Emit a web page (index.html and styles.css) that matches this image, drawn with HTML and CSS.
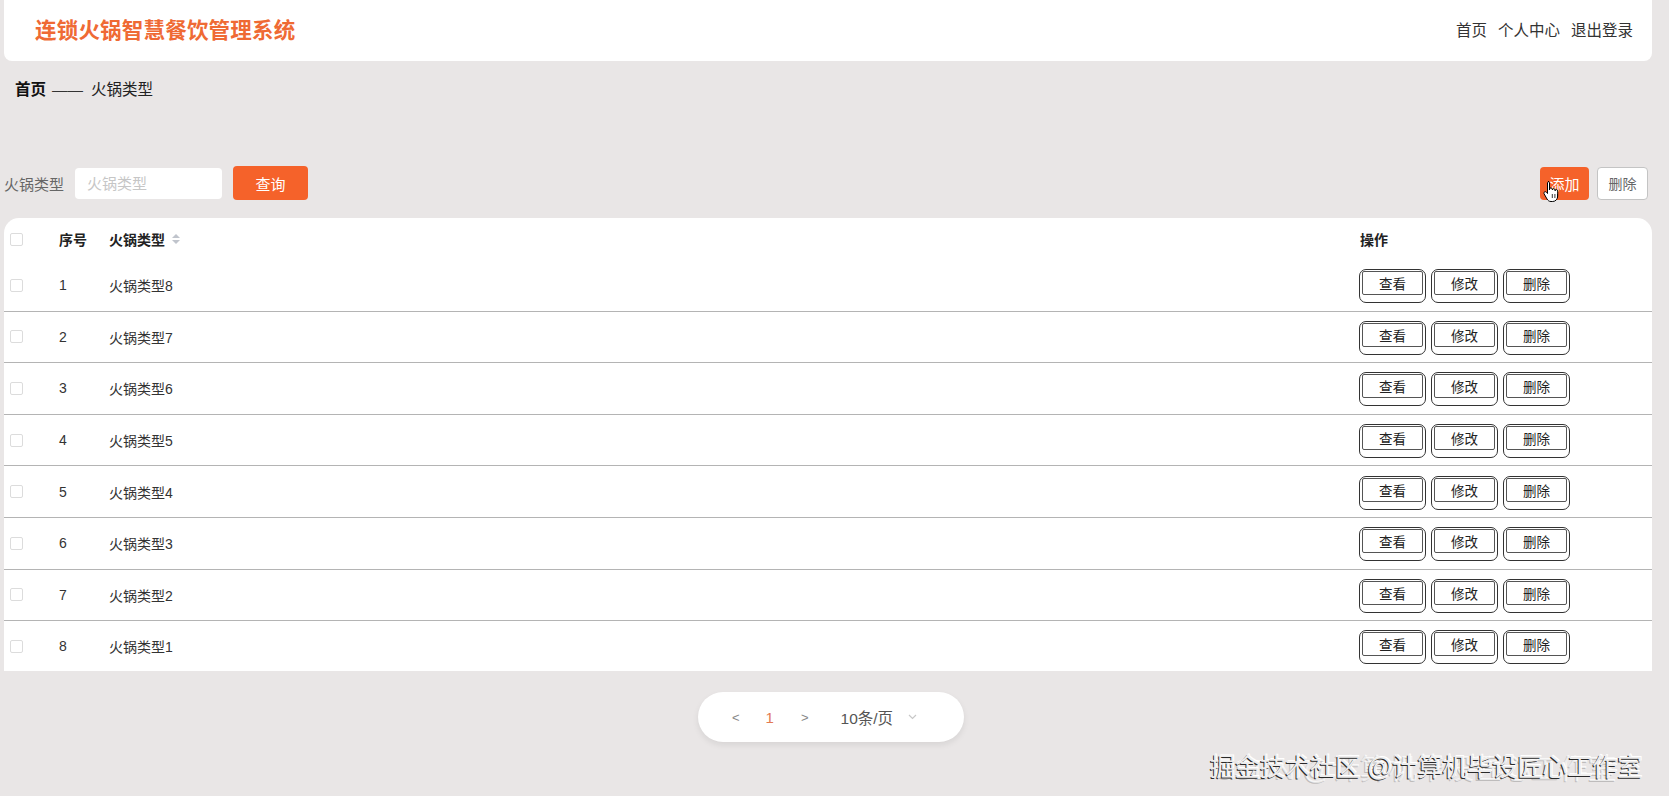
FILE: index.html
```html
<!DOCTYPE html>
<html lang="zh-CN">
<head>
<meta charset="utf-8">
<title>连锁火锅智慧餐饮管理系统</title>
<link rel="stylesheet" href="styles.css">
</head>
<body>
<div class="page">
  <header class="topbar">
    <div class="brand">连锁火锅智慧餐饮管理系统</div>
    <nav class="nav"><span>首页</span><span>个人中心</span><span>退出登录</span></nav>
  </header>

  <div class="crumb"><b>首页</b><span class="sep">——</span><span>火锅类型</span></div>

  <div class="toolbar">
    <div class="search">
      <span class="label">火锅类型</span>
      <div class="input">火锅类型</div>
      <button class="btn-primary btn-query">查询</button>
    </div>
    <div class="actions">
      <button class="btn-primary btn-add">添加</button>
      <button class="btn-plain">删除</button>
    </div>
  </div>

  <div class="table">
    <div class="row head">
      <span class="check"></span>
      <span class="cell">序号</span>
      <span class="cell">火锅类型 <span class="sort"><i class="up"></i><i class="down"></i></span></span>
      <span class="cell">操作</span>
    </div>
    <div class="row"><span class="check"></span><span class="cell">1</span><span class="cell">火锅类型8</span><span class="ops"><button class="key"><span>查看</span></button><button class="key"><span>修改</span></button><button class="key"><span>删除</span></button></span></div>
    <div class="row"><span class="check"></span><span class="cell">2</span><span class="cell">火锅类型7</span><span class="ops"><button class="key"><span>查看</span></button><button class="key"><span>修改</span></button><button class="key"><span>删除</span></button></span></div>
    <div class="row"><span class="check"></span><span class="cell">3</span><span class="cell">火锅类型6</span><span class="ops"><button class="key"><span>查看</span></button><button class="key"><span>修改</span></button><button class="key"><span>删除</span></button></span></div>
    <div class="row"><span class="check"></span><span class="cell">4</span><span class="cell">火锅类型5</span><span class="ops"><button class="key"><span>查看</span></button><button class="key"><span>修改</span></button><button class="key"><span>删除</span></button></span></div>
    <div class="row"><span class="check"></span><span class="cell">5</span><span class="cell">火锅类型4</span><span class="ops"><button class="key"><span>查看</span></button><button class="key"><span>修改</span></button><button class="key"><span>删除</span></button></span></div>
    <div class="row"><span class="check"></span><span class="cell">6</span><span class="cell">火锅类型3</span><span class="ops"><button class="key"><span>查看</span></button><button class="key"><span>修改</span></button><button class="key"><span>删除</span></button></span></div>
    <div class="row"><span class="check"></span><span class="cell">7</span><span class="cell">火锅类型2</span><span class="ops"><button class="key"><span>查看</span></button><button class="key"><span>修改</span></button><button class="key"><span>删除</span></button></span></div>
    <div class="row last"><span class="check"></span><span class="cell">8</span><span class="cell">火锅类型1</span><span class="ops"><button class="key"><span>查看</span></button><button class="key"><span>修改</span></button><button class="key"><span>删除</span></button></span></div>
  </div>

  <div class="pager-wrap">
    <div class="pager">
      <span class="arrow">&lt;</span>
      <span class="num">1</span>
      <span class="arrow">&gt;</span>
      <span class="size">10条/页</span>
      <svg class="chev" width="9" height="6" viewBox="0 0 9 6"><path d="M1 1l3.5 3.5L8 1" fill="none" stroke="#c8c8c8" stroke-width="1.2"/></svg>
    </div>
  </div>
</div>

<svg class="cursor" width="18" height="24" viewBox="0 0 18 24"><path d="M5 1.5c.8 0 1.5.7 1.5 1.5V10V9.2c0-.8.7-1.3 1.4-1.3s1.4.5 1.4 1.3V10c0-.8.7-1.3 1.4-1.3s1.4.5 1.4 1.3v.8c0-.8.6-1.2 1.3-1.2s1.3.5 1.3 1.3V16c0 3-2 5.5-5 5.5H8c-2 0-3-1-4-2.5L1.2 14c-.5-.8-.3-1.7.4-2.1.7-.4 1.5-.2 2 .5l.9 1.1V3c0-.8.7-1.5 1.5-1.5z" fill="#fff" stroke="#000" stroke-width="1"/><path d="M9.3 14v4M11.9 14v4M14.5 14v4" stroke="#000" stroke-width=".8"/></svg>

<div class="watermark">
  <span class="ghost">CSDN @计算机毕设匠心工作室</span>
  <span class="main">掘金技术社区 @计算机毕设匠心工作室</span>
</div>
</body>
</html>
```

FILE: styles.css
```css
* { box-sizing: border-box; }
html, body { margin: 0; padding: 0; }
body {
  background: #e9e6e6;
  font-family: "Liberation Sans", "Noto Sans CJK SC", sans-serif;
  color: #333;
  width: 1669px;
  height: 796px;
  overflow: hidden;
  position: relative;
}
.page {
  padding: 0 17px 0 4px;
}
.topbar {
  height: 61px;
  background: #fff;
  border-radius: 0 0 8px 8px;
  display: flex;
  align-items: center;
  justify-content: space-between;
  padding: 0 19px 4px 31px;
}
.brand {
  font-size: 21.5px;
  font-weight: 700;
  color: #ef6a34;
  letter-spacing: 0.2px;
}
.nav {
  display: flex;
  gap: 11px;
  font-size: 15.5px;
  color: #333;
}
.crumb {
  margin-top: 19px;
  height: 20px;
  line-height: 20px;
  font-size: 15.5px;
  color: #222;
  padding-left: 11px;
  display: flex;
  align-items: center;
}
.crumb b { font-weight: 700; color: #111; }
.crumb .sep { margin: 0 8px 0 6px; letter-spacing: 0; color: #333; }

.toolbar {
  margin-top: 66px;
  height: 34px;
  display: flex;
  align-items: center;
  justify-content: space-between;
  padding-right: 4px;
}
.search { display: flex; align-items: center; }
.label { font-size: 15px; color: #666; width: 71px; }
.input {
  width: 147px;
  height: 31px;
  background: #fff;
  border-radius: 4px;
  font-size: 15px;
  color: #c6c6c6;
  line-height: 31px;
  padding-left: 12px;
}
button { font-family: inherit; cursor: pointer; }
.btn-primary {
  background: #f5622a;
  color: #fff;
  border: none;
  border-radius: 4px;
  font-size: 15px;
  height: 34px;
}
.btn-query { width: 75px; margin-left: 11px; }
.actions { display: flex; gap: 8px; align-items: center; }
.btn-add { width: 49px; height: 33px; padding: 0; }
.btn-plain {
  width: 51px;
  height: 33px;
  background: #fff;
  border: 1px solid #c4c4c4;
  border-radius: 4px;
  font-size: 14px;
  color: #666;
  padding: 0;
}

.table {
  margin-top: 18px;
  background: #fff;
  border-radius: 15px 15px 0 0;
}
.row {
  display: grid;
  grid-template-columns: 49px 50px 1fr 292px;
  align-items: center;
  padding-left: 6px;
  height: 51.6px;
  border-bottom: 1px solid #b4b4b4;
  font-size: 14px;
  color: #333;
}
.row.head {
  height: 42px;
  border-bottom: none;
  font-weight: 700;
  color: #222;
}
.row.last { border-bottom: none; height: 50px; }
.check {
  width: 13px;
  height: 13px;
  border: 1px solid #dcdcdc;
  border-radius: 2px;
  background: #fff;
}
.cell { display: flex; align-items: center; }
.sort {
  display: inline-flex;
  flex-direction: column;
  gap: 2px;
  margin-left: 7px;
}
.sort i {
  display: block;
  width: 0; height: 0;
  border-left: 4px solid transparent;
  border-right: 4px solid transparent;
}
.sort .up { border-bottom: 4px solid #c0c4cc; }
.sort .down { border-top: 4px solid #c0c4cc; }
.ops { display: flex; gap: 5px; margin-left: -1px; padding-top: 2px; }
.key {
  width: 67px;
  height: 34px;
  padding: 1px 2px 7px;
  background: #fff;
  border: 1px solid #333;
  border-radius: 7px;
  display: flex;
  position: relative;
}
.key span {
  flex: 1;
  display: flex;
  align-items: center;
  justify-content: center;
  border: 1px solid #555;
  border-radius: 2px;
  font-size: 13.5px;
  color: #222;
}

.pager-wrap {
  display: flex;
  justify-content: center;
  margin-top: 21px;
  padding-left: 6px;
}
.pager {
  width: 266px;
  height: 50px;
  background: #fff;
  border-radius: 25px;
  box-shadow: 0 3px 6px rgba(0,0,0,0.08);
  display: flex;
  align-items: center;
  padding-left: 34px;
  color: #888;
}
.pager .arrow { font-size: 13px; color: #888; }
.pager .num { font-size: 15px; color: #e37a52; margin: 0 27px 0 26px; }
.pager .size { font-size: 15.5px; color: #555; margin-left: 32px; }
.pager .chev { margin-left: 15px; }

.cursor {
  position: absolute;
  left: 1543px;
  top: 180px;
}

.watermark {
  position: absolute;
  left: 1210px;
  top: 742px;
  width: 459px;
  height: 46px;
  pointer-events: none;
}
.watermark .ghost {
  position: absolute;
  left: 4px;
  top: 4px;
  font-size: 28.5px;
  white-space: nowrap;
  color: rgba(255,255,255,0.7);
  text-shadow: -1px 1px 0 rgba(110,110,110,0.35);
}
.watermark .main {
  position: absolute;
  left: 0;
  top: 5px;
  font-size: 25px;
  white-space: nowrap;
  color: #eeeded;
  text-shadow: -1px 1px 0 #2a2a2a, 1px -1px 0 #fff;
}
```
